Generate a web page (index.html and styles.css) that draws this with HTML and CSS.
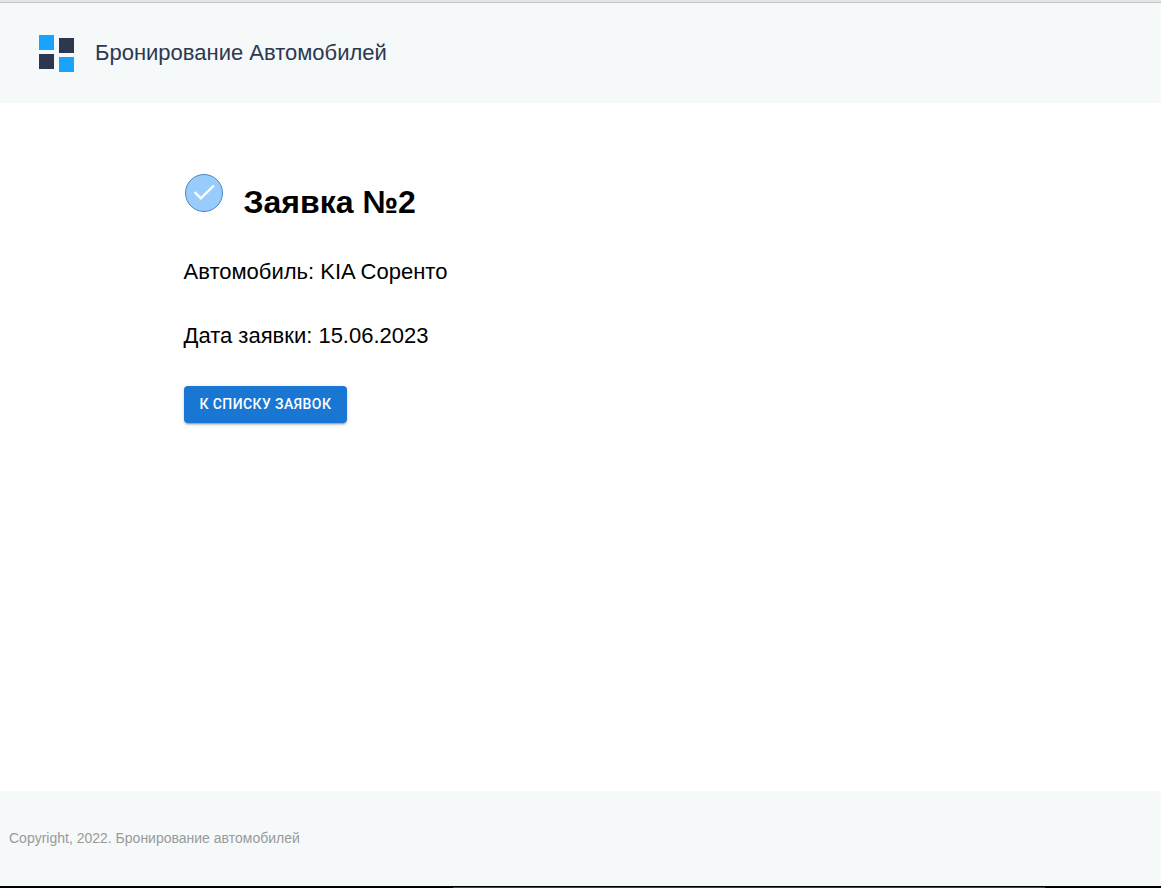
FILE: index.html
```html
<!DOCTYPE html>
<html lang="ru">
<head>
<meta charset="utf-8">
<title>Бронирование Автомобилей</title>
<link rel="stylesheet" href="styles.css">
</head>
<body>
<header class="header">
  <svg class="logo" width="35" height="37" viewBox="0 0 35 37" shape-rendering="crispEdges" aria-hidden="true">
    <path fill="#18a3fd" d="M0 0h15v15H0zM20 22h15v15H20z"/>
    <path fill="#2d3850" d="M20 3h15v15H20zM0 19h15v15H0z"/>
  </svg>
  <span class="brand">Бронирование Автомобилей</span>
</header>
<main class="content">
  <div class="heading">
    <svg class="status" width="40" height="40" viewBox="0 0 40 40" aria-hidden="true">
      <circle cx="20" cy="20" r="18.5" fill="#98ccfd" stroke="#4788c7"/>
      <path d="M10.7 19.2l6.1 6.1L29.9 12.5" fill="none" stroke="#fff" stroke-width="2.4"/>
    </svg>
    <h1 class="title">Заявка №2</h1>
  </div>
  <p class="detail">Автомобиль: KIA Соренто</p>
  <p class="detail">Дата заявки: 15.06.2023</p>
  <button class="button" type="button">К списку заявок</button>
</main>
<footer class="footer">Copyright, 2022. Бронирование автомобилей</footer>
<div class="edge"><div class="edge-highlight"></div></div>
</body>
</html>
```
FILE: styles.css
```css
* {
  box-sizing: border-box;
}

body {
  margin: 0;
  min-height: 100vh;
  display: flex;
  flex-direction: column;
  border-top: 2px solid #e6e6e7;
  background: #fff;
  color: #000;
  font-family: "Liberation Sans", Arial, sans-serif;
}

.header {
  display: flex;
  align-items: flex-start;
  gap: 21px;
  padding: 32px 39px 31px;
  border-top: 1px solid #c5c5c8;
  background: #f5f9fa;
}

.brand {
  color: #2d3850;
  font-size: 22px;
  line-height: 36px;
}

.content {
  flex: 1;
  width: 100%;
  max-width: 794px;
  margin: 0 auto;
  padding: 70px 0;
}

.heading {
  display: flex;
  align-items: flex-start;
  gap: 20px;
  margin-bottom: 38px;
}

.status {
  flex: none;
}

.title {
  margin: 0;
  padding-top: 11px;
  font-size: 32px;
  line-height: 36px;
}

.detail {
  margin: 0 0 36px;
  font-size: 22px;
  line-height: 28px;
}

.button {
  padding: 6px 16px;
  border: 0;
  border-radius: 4px;
  background: #1976d2;
  color: #fff;
  font: 500 14px/25px Roboto, sans-serif;
  letter-spacing: 0.02857em;
  text-transform: uppercase;
  box-shadow: 0 3px 1px -2px rgba(0, 0, 0, 0.2), 0 2px 2px 0 rgba(0, 0, 0, 0.14), 0 1px 5px 0 rgba(0, 0, 0, 0.12);
  cursor: pointer;
}

.footer {
  padding: 37px 9px 38px;
  background: #f5f9fa;
  color: #999;
  font-size: 14px;
  line-height: 20px;
}

.edge {
  padding: 1px 10% 0 39%;
  background: #000;
}

.edge-highlight {
  height: 1px;
  background: #444;
}
```
